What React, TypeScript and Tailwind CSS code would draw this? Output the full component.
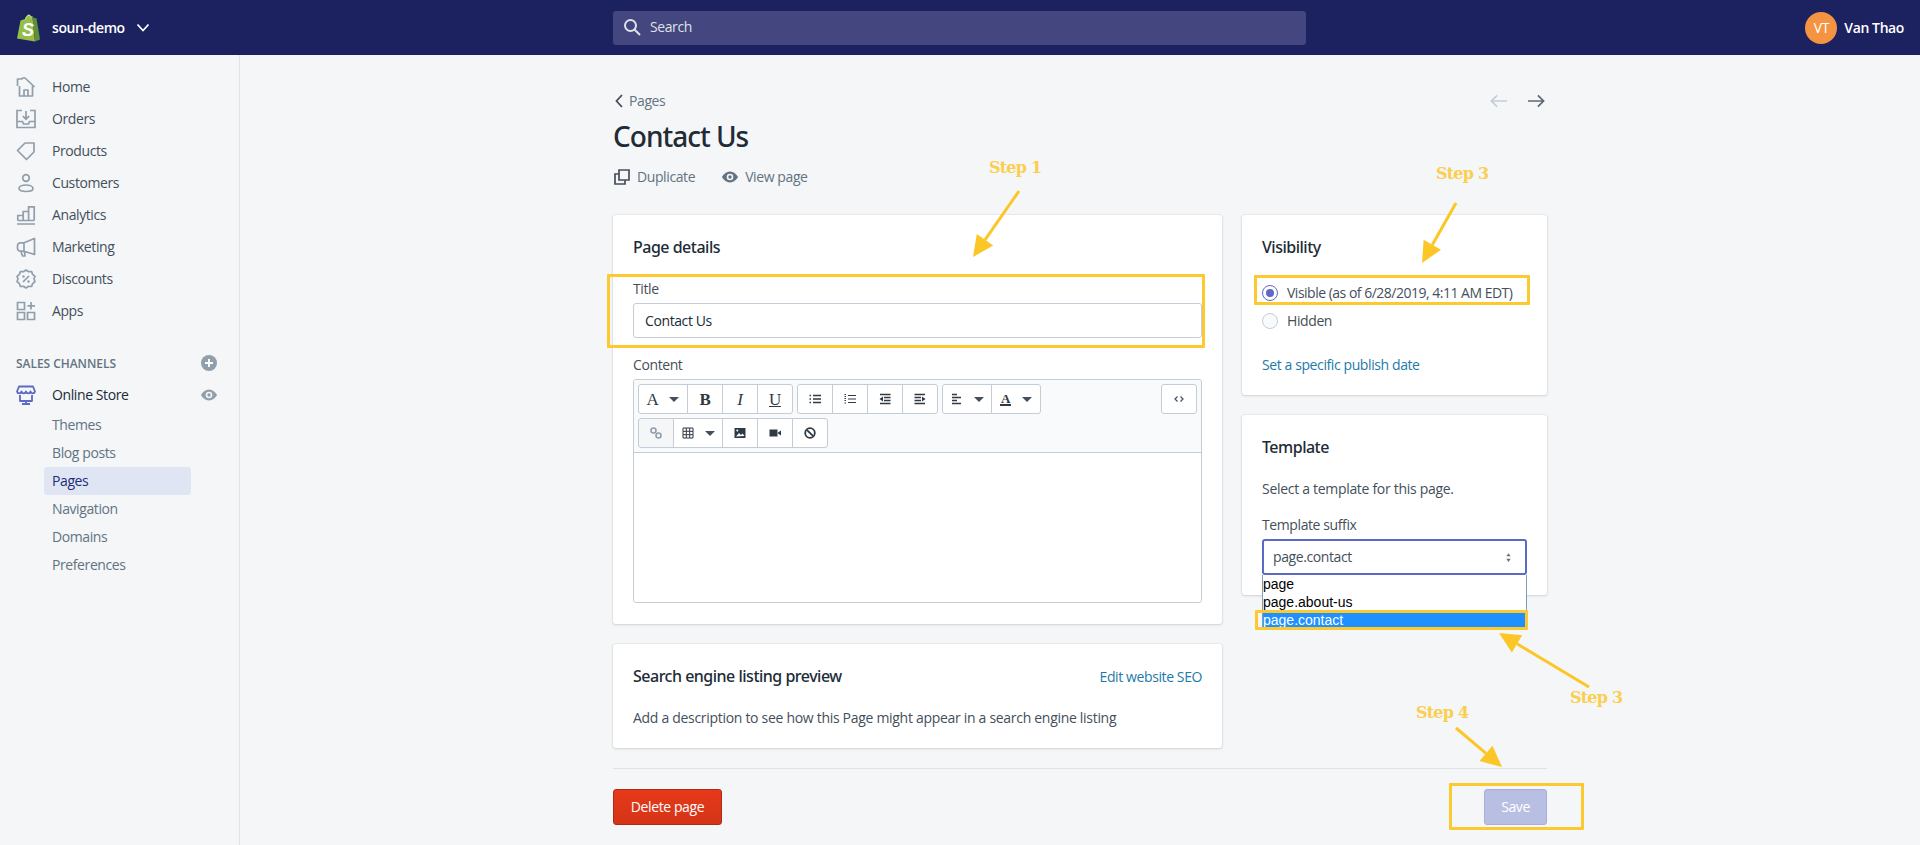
import type { ReactNode } from "react";

const STEP = "absolute font-['DejaVu_Serif',serif] text-[16px] leading-[20px] font-bold text-[#fbce4e] whitespace-nowrap tracking-[-0.8px]";
const BOX = "absolute border-[3px] border-[#fcc92f] rounded-[1px]";

function Ico({ children, className = "text-[#919eab]" }: { children: ReactNode; className?: string }) {
  return (
    <svg viewBox="0 0 20 20" fill="none" stroke="currentColor" strokeWidth="1.700" className={`w-5 h-5 shrink-0 ${className}`}>
      {children}
    </svg>
  );
}

const NAV: { label: string; icon: ReactNode }[] = [
  {
    label: "Home",
    icon: <path d="M1.500 9V2h4L7 1h2l9 8.500h-1.500V19h-13V9M8 19v-6h4v6" strokeLinejoin="round" />,
  },
  {
    label: "Orders",
    icon: <path d="M6 1.500H1v17h18v-17h-5M1 12.500h5.500l1 2.500h5l1-2.500H19M10 2v8M6.800 7 10 10.200 13.200 7" />,
  },
  {
    label: "Products",
    icon: <path d="M1.500 9.500 9 2h9v9l-7.500 7.500zM14.500 5.500h.01" strokeLinejoin="round" />,
  },
  {
    label: "Customers",
    icon: (
      <>
        <circle cx="10" cy="5" r="3.300" />
        <path d="M3 15.500c0-2 3-3.500 7-3.500s7 1.500 7 3.500-3 3-7 3-7-1-7-3z" />
      </>
    ),
  },
  {
    label: "Analytics",
    icon: <path d="M1 19h18M1.800 15.500v-5h5.400v5M7.200 15.500v-9h5.400v9M12.600 15.500V1.800h5.600v13.700M1.800 15.500h16.400" />,
  },
  {
    label: "Marketing",
    icon: <path d="M18.500 1.500v16L8 14.200H4.500a3 3 0 0 1-3-3V8.800a3 3 0 0 1 3-3H8zM8 5.800v8.400M5 14.500 6.500 19H9l-.6-4.500" strokeLinejoin="round" />,
  },
  {
    label: "Discounts",
    icon: (
      <>
        <path d="M10 1l2.600 1.700 3-.2 1 2.900 2.400 1.900-1 2.700 1 2.700-2.400 1.900-1 2.900-3-.2L10 19l-2.600-1.700-3 .2-1-2.900L1 12.700l1-2.700-1-2.700 2.400-1.900 1-2.900 3 .2z" strokeLinejoin="round" />
        <path d="M13 7l-6 6" />
        <circle cx="7.500" cy="7.500" r="1.200" fill="currentColor" stroke="none" />
        <circle cx="12.500" cy="12.500" r="1.200" fill="currentColor" stroke="none" />
      </>
    ),
  },
  {
    label: "Apps",
    icon: <path d="M1.500 1.500h7v7h-7zM1.500 11.500h7v7h-7zM11.500 11.500h7v7h-7zM15 1v7.500M11.500 4.800H19" />,
  },
];

const SUB = ["Themes", "Blog posts", "Pages", "Navigation", "Domains", "Preferences"];

function ShopifyLogo() {
  return (
    <svg viewBox="0 0 24 28" className="w-6 h-7 shrink-0">
      <path d="M1 24.500 4.500 6.500 9 5C10 2 11.500.5 13 .5c1 0 1.600.7 1.900 1.800l1.500-.3L19 27.500z" fill="#95bf47" />
      <path d="M16.400 2.100 18 4l2.500.3L24 25.500 19 27.500z" fill="#5e8e3e" />
      <path d="M9.500 5.300C10.200 3 11.500 1.300 13 1.300s2 2 2 3" fill="none" stroke="#e8f0d8" strokeWidth=".7" />
      <text x="6" y="22" fontFamily="Liberation Sans, sans-serif" fontSize="18" fontWeight="700" fontStyle="italic" fill="#fff">S</text>
    </svg>
  );
}

function EyeIcon({ className }: { className: string }) {
  return (
    <svg viewBox="0 0 16 16" className={className} fill="currentColor">
      <path fillRule="evenodd" d="M8 2.500C3.800 2.500.8 6.500 0 8c.8 1.500 3.800 5.500 8 5.500s7.200-4 8-5.500c-.8-1.500-3.800-5.500-8-5.500zM8 4.700a3.300 3.300 0 1 1 0 6.600 3.300 3.300 0 0 1 0-6.600z" />
      <circle cx="8" cy="8" r="1.700" />
    </svg>
  );
}

function Caret() {
  return <span className="w-0 h-0 border-x-[5px] border-x-transparent border-t-[5px] border-t-[#454f5b]" />;
}

function Tool({ children, caret, muted }: { children: ReactNode; caret?: boolean; muted?: boolean }) {
  return (
    <div
      className={`h-[30px] flex items-center justify-center -ml-px first:ml-0 border border-[#c4cdd5] first:rounded-l-[3px] last:rounded-r-[3px] ${
        caret ? "w-[50px] gap-[11px]" : "w-[36px]"
      } ${muted ? "bg-[#f4f6f8]" : "bg-white"}`}
    >
      {children}
      {caret && <Caret />}
    </div>
  );
}

function Glyph({ children, className = "" }: { children: ReactNode; className?: string }) {
  return <span className={`font-['Liberation_Serif',serif] text-[17px] leading-none font-bold text-[#2f3a44] ${className}`}>{children}</span>;
}

function Mini({ children, className = "text-[#2f3a44]" }: { children: ReactNode; className?: string }) {
  return (
    <svg viewBox="0 0 12 12" fill="none" stroke="currentColor" strokeWidth="1.600" className={`w-3 h-3 ${className}`}>
      {children}
    </svg>
  );
}

function Editor() {
  return (
    <div className="mt-[5px] h-[224px] border border-[#c4cdd5] rounded-[3px] flex flex-col">
      <div className="h-[73px] shrink-0 p-1 flex flex-col gap-1 bg-[#f9fafb] border-b border-[#c4cdd5] rounded-t-[3px]">
        <div className="flex">
          <div className="flex">
            <Tool caret><Glyph className="font-normal">A</Glyph></Tool>
            <Tool><Glyph>B</Glyph></Tool>
            <Tool><Glyph className="italic font-normal">I</Glyph></Tool>
            <Tool><Glyph className="underline font-normal">U</Glyph></Tool>
          </div>
          <div className="flex ml-[4px]">
            <Tool><Mini><path d="M4 2.500h8M4 6h8M4 9.500h8M.500 2.500h1.500M.500 6h1.500M.500 9.500h1.500" /></Mini></Tool>
            <Tool><Mini><path d="M4 2.500h8M4 6h8M4 9.500h8M.500 1.500h1.500M.500 3.500h1.500M.500 5.500h1.500M.500 7.500h1.500M.500 10h1.500" strokeWidth="1.200" /></Mini></Tool>
            <Tool>
              <Mini>
                <path d="M1 1.500h10.500M5 4.500h6.500M5 7.500h6.500M1 10.500h10.500" />
                <path d="M4 3.500v5L.500 6z" fill="currentColor" stroke="none" />
              </Mini>
            </Tool>
            <Tool>
              <Mini>
                <path d="M.500 1.500H11M.500 4.500H7M.500 7.500H7M.500 10.500H11" />
                <path d="M8 3.500v5L11.500 6z" fill="currentColor" stroke="none" />
              </Mini>
            </Tool>
          </div>
          <div className="flex ml-[4px]">
            <Tool caret><Mini><path d="M1 1.500h5M1 4.500h9M1 7.500h5M1 10.500h9" /></Mini></Tool>
            <Tool caret>
              <span className="font-['Liberation_Serif',serif] text-[13px] leading-[11px] font-bold text-[#2f3a44] border-b-2 border-[#2f3a44] px-[1px]">A</span>
            </Tool>
          </div>
          <div className="ml-auto flex">
            <Tool>
              <Mini className="text-[#454f5b]">
                <path d="M4.500 3.500 2 6l2.500 2.500M7.500 3.500 10 6 7.500 8.500" strokeWidth="1.200" />
              </Mini>
            </Tool>
          </div>
        </div>
        <div className="flex">
          <Tool muted>
            <Mini className="text-[#919eab]">
              <circle cx="3.500" cy="3.500" r="2.500" />
              <circle cx="8.500" cy="8.500" r="2.500" />
            </Mini>
          </Tool>
          <Tool caret>
            <Mini>
              <path d="M1 1h10v10H1zM1 4.300h10M1 7.700h10M4.300 1v10M7.700 1v10" strokeWidth="1" />
            </Mini>
          </Tool>
          <Tool>
            <Mini>
              <path d="M.500 1h11v10H.500z" fill="currentColor" stroke="none" />
              <path d="M2 9.500 5 6l2 2 1.500-1.500 2 2.500z" fill="#fff" stroke="none" />
              <circle cx="3.300" cy="3.500" r="1" fill="#fff" stroke="none" />
            </Mini>
          </Tool>
          <Tool>
            <Mini>
              <path d="M.500 2.500h8v7h-8zM9 5.500 12 3.500v5L9 6.500z" fill="currentColor" stroke="none" />
            </Mini>
          </Tool>
          <Tool>
            <Mini>
              <circle cx="6" cy="6" r="4.800" strokeWidth="1.800" />
              <path d="M2.800 2.800 9.200 9.200" strokeWidth="1.800" />
            </Mini>
          </Tool>
        </div>
      </div>
      <div className="flex-1 bg-white rounded-b-[3px]" />
    </div>
  );
}

function Card({ children, className = "" }: { children: ReactNode; className?: string }) {
  return <div className={`bg-white rounded-[3px] shadow-[0_0_0_1px_rgba(63,63,68,0.05),0_1px_3px_0_rgba(63,63,68,0.15)] px-5 ${className}`}>{children}</div>;
}

function Heading({ children }: { children: ReactNode }) {
  return <h2 className="h-6 leading-[22px] font-['Noto_Sans',sans-serif] text-[16px] font-medium tracking-[-0.5px] text-[#212b36]">{children}</h2>;
}

function Radio({ on, label }: { on?: boolean; label: string }) {
  return (
    <div className="h-5 flex items-center gap-[9px]">
      <span className={`w-4 h-4 rounded-full border flex items-center justify-center ${on ? "border-[#5c6ac4] bg-white" : "border-[#c4cdd5] bg-[#f9fafb]"}`}>
        {on && <span className="w-2 h-2 rounded-full bg-[#5c6ac4]" />}
      </span>
      <span className={`text-[#454f5b] whitespace-nowrap ${on ? "tracking-[-0.5px]" : ""}`}>{label}</span>
    </div>
  );
}

function ArrowLine({ x1, y1, x2, y2 }: { x1: number; y1: number; x2: number; y2: number }) {
  const a = Math.atan2(y2 - y1, x2 - x1);
  const len = 21;
  const half = 10;
  const bx = x2 - Math.cos(a) * len;
  const by = y2 - Math.sin(a) * len;
  const nx = -Math.sin(a) * half;
  const ny = Math.cos(a) * half;
  return (
    <g>
      <line x1={x1} y1={y1} x2={bx} y2={by} stroke="#fcc627" strokeWidth="3" />
      <polygon points={`${x2},${y2} ${bx + nx},${by + ny} ${bx - nx},${by - ny}`} fill="#fcc627" />
    </g>
  );
}

function Annotations() {
  return (
    <>
      <svg className="absolute inset-0 w-[1920px] h-[845px] pointer-events-none" viewBox="0 0 1920 845">
        <ArrowLine x1={1019} y1={191} x2={973} y2={257} />
        <ArrowLine x1={1456} y1={203} x2={1422} y2={263} />
        <ArrowLine x1={1589} y1={687} x2={1499} y2={633} />
        <ArrowLine x1={1456} y1={728} x2={1502} y2={767} />
      </svg>
      <span className={`${STEP} left-[989px] top-[158px]`}>Step 1</span>
      <span className={`${STEP} left-[1436px] top-[164px]`}>Step 3</span>
      <span className={`${STEP} left-[1570px] top-[688px]`}>Step 3</span>
      <span className={`${STEP} left-[1416px] top-[703px]`}>Step 4</span>
      <div className={`${BOX} left-[607px] top-[274px] w-[598px] h-[74px]`} />
      <div className={`${BOX} left-[1254px] top-[275px] w-[276px] h-[30px]`} />
      <div className={`${BOX} left-[1255px] top-[610px] w-[273px] h-[20px]`} />
      <div className={`${BOX} left-[1449px] top-[783px] w-[135px] h-[47px]`} />
    </>
  );
}

export default function App() {
  return (
    <div className="relative h-[845px] overflow-hidden bg-[#f4f6f8] font-['Open_Sans','Noto_Sans',sans-serif] text-[14px] leading-5 tracking-[-0.4px] text-[#212b36]">
      <header className="h-[55px] bg-[#1c2260] flex items-center relative">
        <div className="w-[240px] pl-4 flex items-center gap-3">
          <ShopifyLogo />
          <span className="text-white font-semibold">soun-demo</span>
          <svg viewBox="0 0 14 10" className="w-[14px] h-[10px] text-white -ml-[1px]" fill="none" stroke="currentColor" strokeWidth="1.800">
            <path d="M1.500 1.500 7 7.500l5.500-6" />
          </svg>
        </div>
        <div className="ml-[373px] w-[693px] h-[34px] rounded-[3px] bg-[#43467f] flex items-center pl-[10px] pb-px gap-[9px] text-[#dfe3e8]">
          <svg viewBox="0 0 18 18" className="w-[18px] h-[18px]" fill="none" stroke="currentColor" strokeWidth="2">
            <circle cx="7.500" cy="7.500" r="5.500" />
            <path d="m11.500 11.500 5.500 5.500" />
          </svg>
          <span>Search</span>
        </div>
        <div className="ml-auto pr-4 flex items-center gap-[7px]">
          <div className="w-8 h-8 rounded-full bg-[#f49342] flex items-center justify-center text-white">VT</div>
          <span className="text-white font-semibold">Van Thao</span>
        </div>
      </header>

      <div className="flex h-[790px]">
        <aside className="w-[240px] shrink-0 border-r border-[#dfe3e8] pt-4">
          {NAV.map((item) => (
            <div key={item.label} className="h-8 pl-4 flex items-center gap-4 text-[#454f5b] font-medium">
              <Ico>{item.icon}</Ico>
              <span>{item.label}</span>
            </div>
          ))}
          <div className="mt-5 h-8 pl-4 pr-[22px] flex items-center justify-between">
            <span className="text-[12px] font-semibold text-[#637381] uppercase tracking-[-0.05px] pt-px">Sales channels</span>
            <svg viewBox="0 0 16 16" className="w-4 h-4">
              <circle cx="8" cy="8" r="8" fill="#919eab" />
              <path d="M8 4v8M4 8h8" stroke="#fff" strokeWidth="2" />
            </svg>
          </div>
          <div className="h-8 pl-4 pr-[22px] flex items-center gap-4">
            <Ico className="text-[#5c6ac4]">
              <path d="M3 1.500h14l2 5a2.300 2.300 0 0 1-4.500 0 2.300 2.300 0 0 1-4.500 0 2.300 2.300 0 0 1-4.500 0 2.300 2.300 0 0 1-4.500 0zM4 10v6h12v-6M6 19h8M10 16v3" strokeWidth="1.800" strokeLinejoin="round" />
            </Ico>
            <span className="font-medium text-[#212b36]">Online Store</span>
            <EyeIcon className="ml-auto w-4 h-4 text-[#919eab]" />
          </div>
          {SUB.map((name) => (
            <div
              key={name}
              className={`h-7 ml-[44px] w-[147px] pl-2 flex items-center rounded-[3px] ${
                name === "Pages" ? "bg-[#e0e5f3] text-[#202e78]" : "text-[#637381]"
              }`}
            >
              {name}
            </div>
          ))}
        </aside>

        <main className="flex-1 min-w-0">
          <div className="w-[934px] mx-auto pt-9">
            <div className="h-5 flex items-center justify-between">
              <div className="pl-[2px] flex items-center gap-[6px] text-[#637381]">
                <svg viewBox="0 0 8 14" className="w-2 h-[14px]" fill="none" stroke="#454f5b" strokeWidth="1.800">
                  <path d="M7 1 1.500 7 7 13" />
                </svg>
                <span>Pages</span>
              </div>
              <div className="flex items-center gap-[21px] pr-[2px]">
                <svg viewBox="0 0 18 14" className="w-[17px] h-[14px]" fill="none" stroke="#c4cdd5" strokeWidth="1.800">
                  <path d="M18 7H1.500M7.500 1l-6 6 6 6" />
                </svg>
                <svg viewBox="0 0 18 14" className="w-[17px] h-[14px]" fill="none" stroke="#5c6875" strokeWidth="1.800">
                  <path d="M0 7h16.500M10.500 1l6 6-6 6" />
                </svg>
              </div>
            </div>
            <h1 className="mt-[5px] h-10 leading-10 font-['Noto_Sans',sans-serif] text-[28px] font-medium tracking-[-1px] text-[#212b36]">Contact Us</h1>
            <div className="mt-[11px] h-5 pl-px flex items-center text-[#637381]">
              <svg viewBox="0 0 16 16" className="w-4 h-4 mr-[7px]" fill="none" stroke="#454f5b" strokeWidth="1.700">
                <path d="M5 1h10v10H5zM5 5H1v10h10v-4" />
              </svg>
              <span>Duplicate</span>
              <EyeIcon className="ml-[27px] mr-[7px] w-4 h-4 text-[#637381]" />
              <span>View page</span>
            </div>

            <div className="mt-7 flex gap-5 items-start">
              <div className="flex-1 min-w-0">
                <Card className="pt-[21px] pb-[21px]">
                  <Heading>Page details</Heading>
                  <div className="mt-5 h-[18px] leading-[18px] text-[#454f5b]">Title</div>
                  <div className="mt-[5px] h-[35px] pl-[11px] pr-[10px] flex items-center border border-[#c4cdd5] rounded-[3px] text-[#212b36]">Contact Us</div>
                  <div className="mt-[18px] h-[18px] leading-[18px] text-[#454f5b]">Content</div>
                  <Editor />
                </Card>
                <Card className="mt-5 pt-[21px] pb-5">
                  <div className="flex items-center justify-between">
                    <Heading>Search engine listing preview</Heading>
                    <span className="text-[#1d7aa8]">Edit website SEO</span>
                  </div>
                  <p className="mt-[19px] h-5 text-[#454f5b] tracking-[-0.3px] whitespace-nowrap">Add a description to see how this Page might appear in a search engine listing</p>
                </Card>
              </div>

              <div className="w-[305px] shrink-0">
                <Card className="pt-[21px] pb-5">
                  <Heading>Visibility</Heading>
                  <div className="mt-[23px] flex flex-col gap-2">
                    <Radio on label="Visible (as of 6/28/2019, 4:11 AM EDT)" />
                    <Radio label="Hidden" />
                  </div>
                  <div className="mt-6 h-5 text-[#1d7aa8]">Set a specific publish date</div>
                </Card>
                <Card className="mt-5 pt-[21px] pb-5">
                  <Heading>Template</Heading>
                  <p className="mt-[19px] h-5 text-[#454f5b] tracking-[-0.3px]">Select a template for this page.</p>
                  <div className="mt-[17px] h-[18px] leading-[18px] text-[#454f5b]">Template suffix</div>
                  <div className="relative mt-[5px]">
                    <div className="h-9 pl-[9px] pr-[13px] flex items-center justify-between border-2 border-[#5c6ac4] rounded-[3px] bg-white text-[#454f5b]">
                      <span>page.contact</span>
                      <svg viewBox="0 0 8 12" className="w-[7px] h-[11px]" fill="#637381">
                        <path d="M4 1 6.500 4.500h-5zM4 11 1.500 7.500h5z" />
                      </svg>
                    </div>
                    <ul className="absolute top-full left-0 right-0 bg-white border border-t-0 border-[#7f9db9] font-['Liberation_Sans',sans-serif] text-[14px] tracking-normal leading-[18px] text-black">
                      <li className="h-[18px]">page</li>
                      <li className="h-[18px]">page.about-us</li>
                      <li className="h-[18px] bg-[#1e90ff] text-white">page.contact</li>
                    </ul>
                  </div>
                </Card>
              </div>
            </div>

            <div className="mt-5 border-t border-[#dfe3e8] pt-5 flex justify-between">
              <div className="w-[109px] h-9 flex items-center justify-center rounded-[3px] border border-[#b02b13] bg-gradient-to-b from-[#e6391a] to-[#d53417] text-white">Delete page</div>
              <div className="w-[63px] h-9 flex items-center justify-center rounded-[3px] border border-[#a7aedb] bg-[#b9bfe3] text-white">Save</div>
            </div>
          </div>
        </main>
      </div>

      <Annotations />
    </div>
  );
}
